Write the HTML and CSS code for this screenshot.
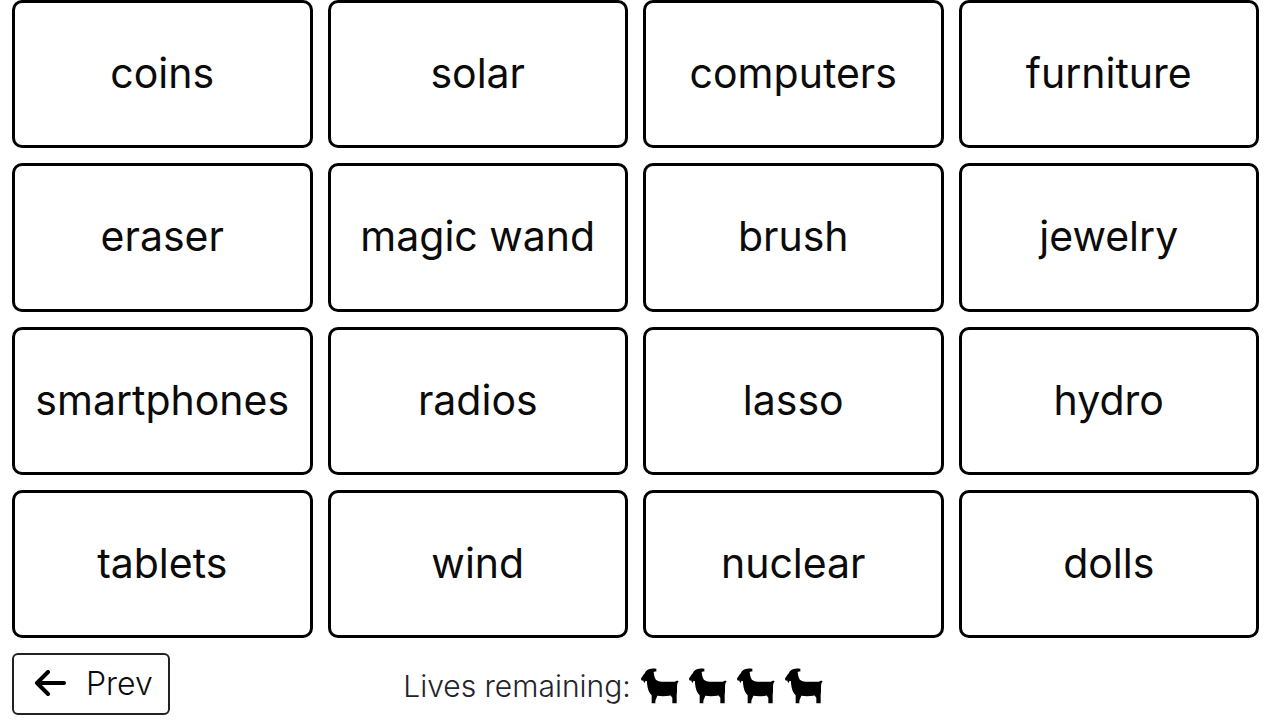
FILE: index.html
```html
<!DOCTYPE html>
<html lang="en">
<head>
<meta charset="utf-8">
<meta name="viewport" content="width=device-width, initial-scale=1">
<title>Connections</title>
<link rel="stylesheet" href="styles.css">
</head>

<body>
<svg class="sprite" aria-hidden="true">
  <symbol id="goat" viewBox="0 0 114 105">
    <path d="M46 1C34-2 20 1 14 9L11 15C6 19 5 25 0 29L1 35L7 37L10 44L14 37L18 38C17 44 19 50 20 57C22 66 25 74 32 80V104H43V97L49 82C62 84 74 84 89 81L94 88V104H107V80C109 67 107 55 109 45L113 39L109 36L101 40C86 39 70 41 56 39C46 37 42 31 40 23L38 11C40 9 43 9 46 9Z"/>
  </symbol>
</svg>

<main class="board">
  <button class="card" type="button">coins</button>
  <button class="card" type="button">solar</button>
  <button class="card" type="button">computers</button>
  <button class="card" type="button">furniture</button>
  <button class="card" type="button">eraser</button>
  <button class="card" type="button">magic wand</button>
  <button class="card" type="button">brush</button>
  <button class="card" type="button">jewelry</button>
  <button class="card" type="button">smartphones</button>
  <button class="card" type="button">radios</button>
  <button class="card" type="button">lasso</button>
  <button class="card" type="button">hydro</button>
  <button class="card" type="button">tablets</button>
  <button class="card" type="button">wind</button>
  <button class="card" type="button">nuclear</button>
  <button class="card" type="button">dolls</button>
</main>

<footer class="footer">
  <button class="prev" type="button">
    <svg class="arrow" viewBox="0 0 32 26" aria-hidden="true">
      <path d="M14 2L3 13L14 24M3 13H30"/>
    </svg>
    Prev
  </button>
  <div class="lives">
    <span>Lives remaining:</span>
    <div class="goats">
      <svg class="goat" aria-hidden="true"><use href="#goat"/></svg>
      <svg class="goat" aria-hidden="true"><use href="#goat"/></svg>
      <svg class="goat" aria-hidden="true"><use href="#goat"/></svg>
      <svg class="goat" aria-hidden="true"><use href="#goat"/></svg>
    </div>
  </div>
</footer>
</body>
</html>
```
FILE: styles.css
```css
* {
  box-sizing: border-box;
}

body {
  display: flex;
  flex-direction: column;
  gap: 15px;
  min-height: 100vh;
  margin: 0;
  padding: 0 21px 5px 12px;
  background: #fff;
  color: #0b0b0b;
  font-family: Inter, "Liberation Sans", sans-serif;
}

button {
  background: #fff;
  color: inherit;
  font-family: inherit;
  cursor: pointer;
}

.sprite {
  display: none;
}

.board {
  display: grid;
  flex: 1;
  grid-template-columns: repeat(4, minmax(0, 1fr));
  grid-auto-rows: 1fr;
  gap: 15px;
}

.card {
  padding: 0 0 2px;
  border: 3px solid #000;
  border-radius: 10px;
  font-size: 41px;
}

.footer {
  display: grid;
  grid-template-columns: 1fr auto 1fr;
  align-items: center;
  padding-right: 45px;
}

.prev {
  display: flex;
  align-items: center;
  justify-self: start;
  gap: 20px;
  height: 62px;
  padding: 0 15px 2px 20px;
  border: 2px solid #222;
  border-radius: 6px;
  font-size: 32px;
  font-weight: 300;
}

.arrow {
  width: 32px;
  height: 26px;
  fill: none;
  stroke: #000;
  stroke-width: 4;
  stroke-linecap: round;
  stroke-linejoin: round;
}

.lives {
  display: flex;
  align-items: center;
  gap: 10px;
  padding-top: 4px;
  color: #23232b;
  font-size: 30px;
  font-weight: 300;
}

.goats {
  display: flex;
  gap: 10px;
}

.goat {
  width: 38px;
  height: 36px;
  fill: #000;
}
```
